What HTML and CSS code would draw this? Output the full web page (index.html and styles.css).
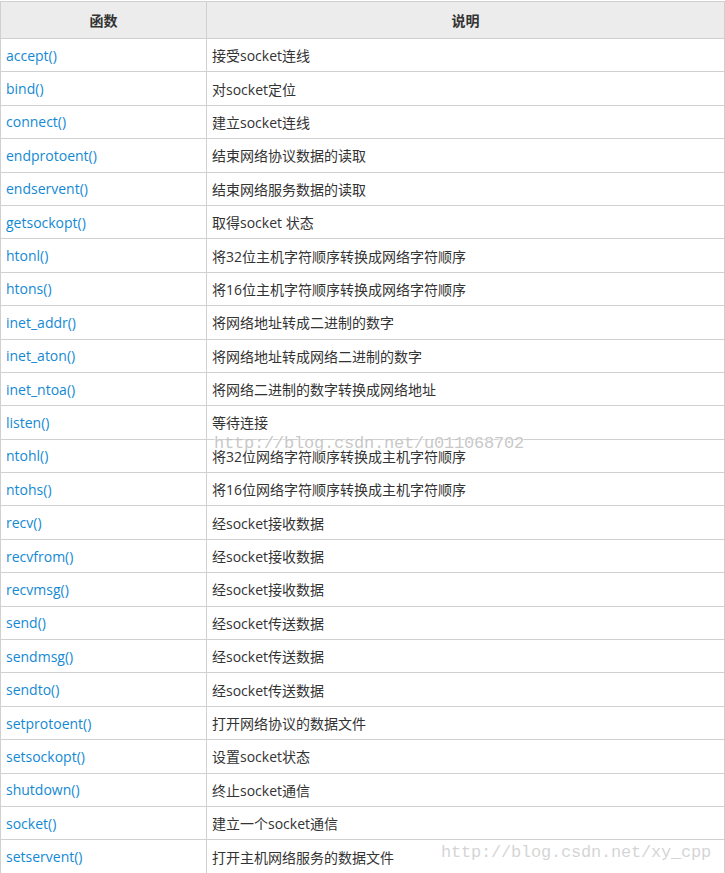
FILE: index.html
```html
<!DOCTYPE html>
<html lang="zh-CN">
<head>
<meta charset="utf-8">
<title>socket 函数</title>
<link rel="stylesheet" href="styles.css">
</head>
<body>
<div class="page">
<table class="api">
  <thead>
    <tr><th class="c1">函数</th><th class="c2">说明</th></tr>
  </thead>
  <tbody>
    <tr><td><a class="fn">accept()</a></td><td>接受socket连线</td></tr>
    <tr><td><a class="fn">bind()</a></td><td>对socket定位</td></tr>
    <tr><td><a class="fn">connect()</a></td><td>建立socket连线</td></tr>
    <tr><td><a class="fn">endprotoent()</a></td><td>结束网络协议数据的读取</td></tr>
    <tr><td><a class="fn">endservent()</a></td><td>结束网络服务数据的读取</td></tr>
    <tr><td><a class="fn">getsockopt()</a></td><td>取得socket 状态</td></tr>
    <tr><td><a class="fn">htonl()</a></td><td>将32位主机字符顺序转换成网络字符顺序</td></tr>
    <tr><td><a class="fn">htons()</a></td><td>将16位主机字符顺序转换成网络字符顺序</td></tr>
    <tr><td><a class="fn">inet_addr()</a></td><td>将网络地址转成二进制的数字</td></tr>
    <tr><td><a class="fn">inet_aton()</a></td><td>将网络地址转成网络二进制的数字</td></tr>
    <tr><td><a class="fn">inet_ntoa()</a></td><td>将网络二进制的数字转换成网络地址</td></tr>
    <tr><td><a class="fn">listen()</a></td><td>等待连接</td></tr>
    <tr><td><a class="fn">ntohl()</a></td><td>将32位网络字符顺序转换成主机字符顺序</td></tr>
    <tr><td><a class="fn">ntohs()</a></td><td>将16位网络字符顺序转换成主机字符顺序</td></tr>
    <tr><td><a class="fn">recv()</a></td><td>经socket接收数据</td></tr>
    <tr><td><a class="fn">recvfrom()</a></td><td>经socket接收数据</td></tr>
    <tr><td><a class="fn">recvmsg()</a></td><td>经socket接收数据</td></tr>
    <tr><td><a class="fn">send()</a></td><td>经socket传送数据</td></tr>
    <tr><td><a class="fn">sendmsg()</a></td><td>经socket传送数据</td></tr>
    <tr><td><a class="fn">sendto()</a></td><td>经socket传送数据</td></tr>
    <tr><td><a class="fn">setprotoent()</a></td><td>打开网络协议的数据文件</td></tr>
    <tr><td><a class="fn">setsockopt()</a></td><td>设置socket状态</td></tr>
    <tr><td><a class="fn">shutdown()</a></td><td>终止socket通信</td></tr>
    <tr><td><a class="fn">socket()</a></td><td>建立一个socket通信</td></tr>
    <tr><td><a class="fn">setservent()</a></td><td>打开主机网络服务的数据文件</td></tr>
  </tbody>
</table>
<div class="mark mark-1">http://blog.csdn.net/u011068702</div>
<div class="mark mark-2">http://blog.csdn.net/xy_cpp</div>
</div>
</body>
</html>
```

FILE: styles.css
```css
html, body {
  margin: 0;
  padding: 0;
  background: #ffffff;
  overflow: hidden;
}

.page {
  position: relative;
  padding-top: 1px;
  width: 725px;
  height: 873px;
  overflow: hidden;
}

.api {
  border-collapse: collapse;
  width: 725px;
  table-layout: fixed;
  font-family: "Open Sans", "Noto Sans CJK SC", sans-serif;
  font-size: 14px;
  color: #333333;
}

.api th,
.api td {
  border: 1px solid #d0d0d0;
  padding: 0 5px;
  text-align: left;
  vertical-align: middle;
  white-space: nowrap;
}

.api th {
  height: 37px;
  background: #ececec;
  text-align: center;
  font-weight: bold;
  color: #333333;
  box-sizing: border-box;
}

.api td {
  height: 32.4px;
}

.api .c1 {
  width: 206px;
}

.api tr > td:first-child {
  width: 206px;
}

.fn {
  color: #1389d3;
  text-decoration: none;
}

.mark {
  position: absolute;
  font-family: "Liberation Mono", "DejaVu Sans Mono", monospace;
  font-size: 17px;
  color: rgba(185, 185, 185, 0.8);
  text-shadow: 1px 1px 0 rgba(255, 255, 255, 0.8), -1px -1px 0 rgba(255, 255, 255, 0.8);
  pointer-events: none;
  white-space: nowrap;
  letter-spacing: -0.2px;
}

.mark-1 {
  left: 214px;
  top: 434px;
}

.mark-2 {
  left: 441px;
  top: 843px;
  color: rgba(205, 205, 205, 0.85);
}
```
